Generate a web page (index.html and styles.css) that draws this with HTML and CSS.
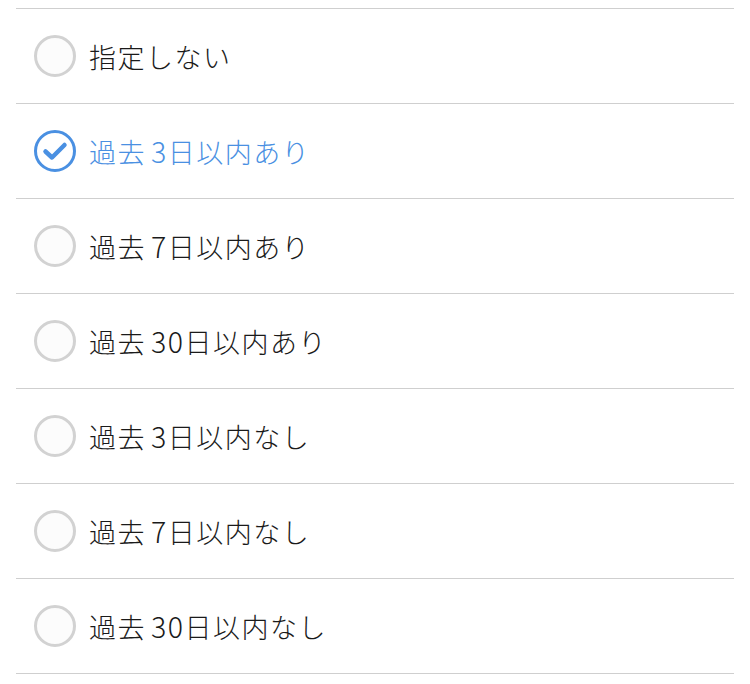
FILE: index.html
```html
<!DOCTYPE html>
<html lang="ja">

<head>
    <meta charset="UTF-8">
    <meta name="viewport" content="width=device-width, initial-scale=1.0">
    <title>期間指定</title>
    <link rel="stylesheet" href="styles.css">
</head>

<body>
    <ul class="option-list">
        <li class="option">
            <span class="radio"></span>
            <span class="label">指定しない</span>
        </li>
        <li class="option selected">
            <svg class="radio-check" width="44" height="44" viewBox="0 0 44 44">
                <circle cx="22" cy="22" r="19.5" fill="#fff" stroke="#4a90e2" stroke-width="3" />
                <path d="M12.5 22.5 L19 28.5 L31.5 16" fill="none" stroke="#4a90e2" stroke-width="4.5"
                    stroke-linecap="round" stroke-linejoin="round" />
            </svg>
            <span class="label">過去<span class="num">3</span>日以内あり</span>
        </li>
        <li class="option">
            <span class="radio"></span>
            <span class="label">過去<span class="num">7</span>日以内あり</span>
        </li>
        <li class="option">
            <span class="radio"></span>
            <span class="label">過去<span class="num">30</span>日以内あり</span>
        </li>
        <li class="option">
            <span class="radio"></span>
            <span class="label">過去<span class="num">3</span>日以内なし</span>
        </li>
        <li class="option">
            <span class="radio"></span>
            <span class="label">過去<span class="num">7</span>日以内なし</span>
        </li>
        <li class="option">
            <span class="radio"></span>
            <span class="label">過去<span class="num">30</span>日以内なし</span>
        </li>
    </ul>
</body>

</html>
```

FILE: styles.css
```css
* {
    margin: 0;
    padding: 0;
    box-sizing: border-box;
}

body {
    font-family: "Noto Sans CJK JP", "Noto Sans", sans-serif;
    background-color: #fff;
    color: #1a1a1a;
}

.option-list {
    list-style-type: none;
    padding: 8px 16px 0;
}

.option {
    display: flex;
    align-items: center;
    gap: 13px;
    height: 95px;
    padding-left: 18px;
    border-top: 1px solid #cfcfcf;
}

.option:last-child {
    border-bottom: 1px solid #cfcfcf;
    height: 96px;
}

.radio {
    width: 42px;
    height: 42px;
    border-radius: 50%;
    border: 3px solid #d2d2d2;
    background-color: #fcfcfc;
    flex-shrink: 0;
}

.radio-check {
    margin: -1px;
    flex-shrink: 0;
}

.label {
    font-size: 27px;
    font-weight: 300;
    letter-spacing: 1.5px;
    line-height: 1;
}

.num {
    font-size: 28.5px;
    letter-spacing: 1.5px;
    margin-left: 5px;
}

.selected .label {
    color: #4a90e2;
}
```
